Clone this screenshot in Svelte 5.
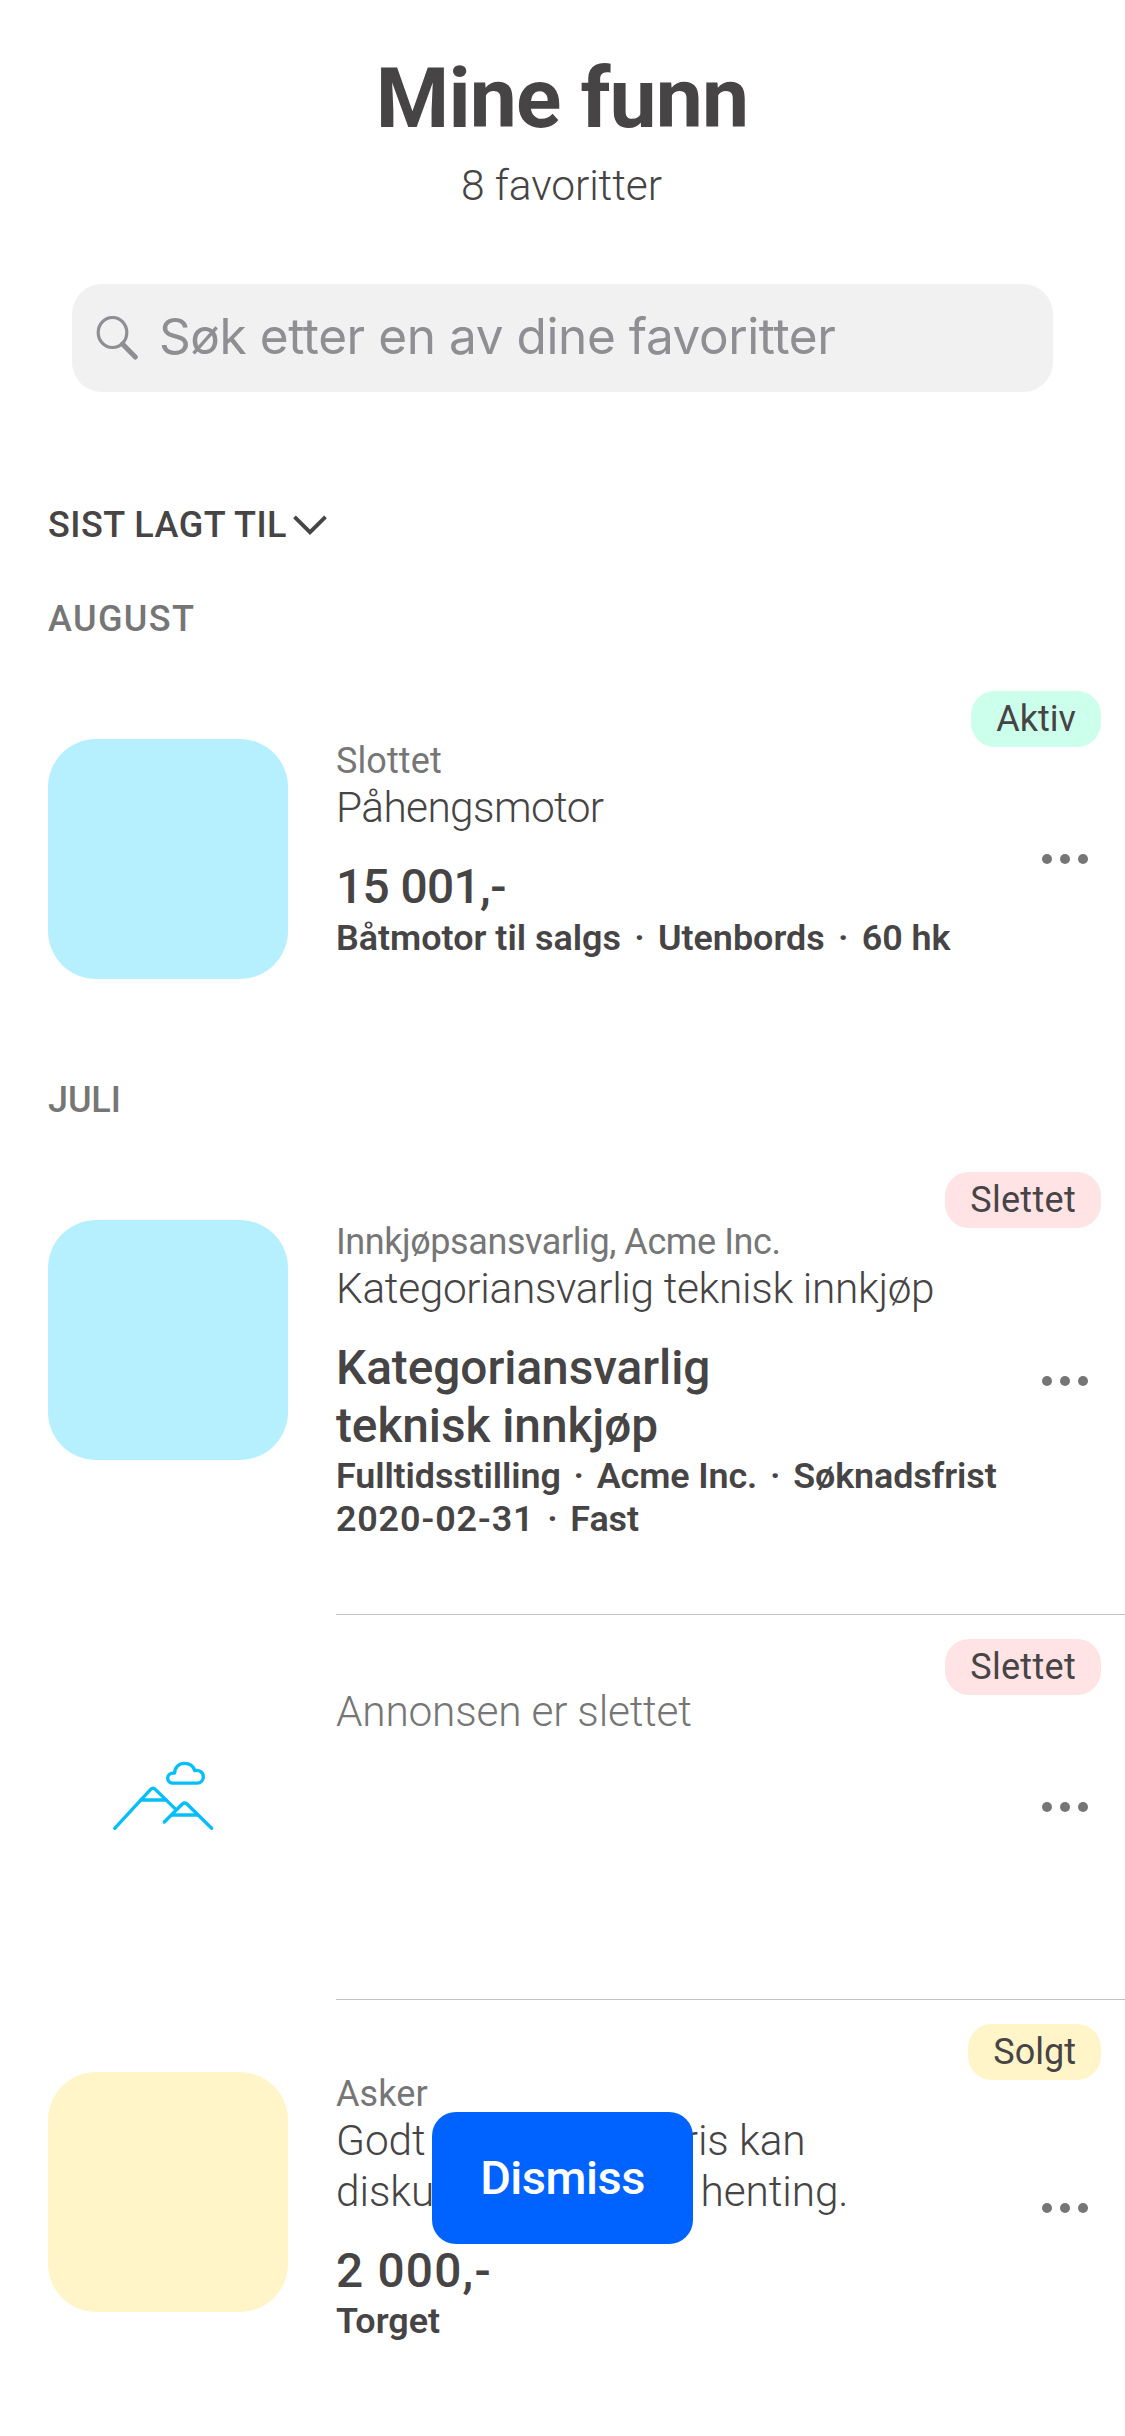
<script>
  const sections = [
    {
      title: 'AUGUST',
      items: [
        {
          status: 'Aktiv', tone: 'green', thumb: 'blue',
          caption: 'Slottet', name: 'Påhengsmotor', price: '15 001,-', fit: 'compact',
          detail: [['Båtmotor til salgs', 'Utenbords', '60 hk']]
        }
      ]
    },
    {
      title: 'JULI',
      items: [
        {
          status: 'Slettet', tone: 'red', thumb: 'blue',
          caption: 'Innkjøpsansvarlig, Acme Inc.',
          name: 'Kategoriansvarlig teknisk innkjøp',
          price: 'Kategoriansvarlig\nteknisk innkjøp', fit: 'long',
          detail: [['Fulltidsstilling', 'Acme Inc.', 'Søknadsfrist'], ['2020-02-31', 'Fast']]
        },
        { status: 'Slettet', tone: 'red', thumb: 'empty', name: 'Annonsen er slettet', fit: 'removed', detail: [] },
        {
          status: 'Solgt', tone: 'yellow', thumb: 'yellow',
          caption: 'Asker',
          name: 'Godt brukt stoler, pris kan\ndiskuteres ved rask henting.',
          price: '2 000,-', fit: 'wide', detail: [['Torget']]
        }
      ]
    }
  ];
</script>

<main class="screen">
  <header>
    <h1>Mine funn</h1>
    <p class="count">8 favoritter</p>
  </header>

  <div class="search">
    <svg class="glass" viewBox="0 0 44 44">
      <ellipse cx="16.500" cy="16.500" rx="14.300" ry="15" fill="none" stroke="#8e8e93" stroke-width="3.200" />
      <path d="M26.500 28 39.300 41" stroke="#8e8e93" stroke-width="5" stroke-linecap="round" />
    </svg>
    <span>Søk etter en av dine favoritter</span>
  </div>

  <button class="sort">
    <span>SIST LAGT TIL</span>
    <svg class="chevron" viewBox="0 0 34 20">
      <path d="M1.500 1.800 17 17.200 32.500 1.800" fill="none" stroke="#464444" stroke-width="3.800" />
    </svg>
  </button>

  {#each sections as section}
    <section>
      <h2 class:spaced={section.title.length > 4}>{section.title}</h2>
      {#each section.items as item, i}
        <article class="row {item.fit}" class:divided={i < section.items.length - 1}>
          <div class="thumb {item.thumb}">
            {#if item.thumb === 'empty'}
              <svg class="hills" viewBox="36 58 312 220" fill="none" stroke="#06befb" stroke-width="10" stroke-linecap="round" stroke-linejoin="round">
                <path d="M44 266 152 149Q159 142 166 149L228 210" />
                <path d="M122 181H198" />
                <path d="M193 247 247 193Q254 187 261 193L335 266" />
                <path d="M217 226H293" />
                <path d="M219 130.500H291C303 130.500 310 121 310 111 310 99 298 89 284 93 280 78 268 71 254 71 236 71 224 84 224 100 211 99 203 106 203 115 203 124 210 130.500 219 130.500Z" />
              </svg>
            {/if}
          </div>
          <div class="body">
            {#if item.caption}<p class="caption">{item.caption}</p>{/if}
            <p class="name">{item.name}</p>
            {#if item.price}<p class="price">{item.price}</p>{/if}
            {#each item.detail as line}
              <p class="detail">{#each line as part, n}{#if n}<span class="dot">·</span>{/if}<span class:date={part.startsWith('2')}>{part}</span>{/each}</p>
            {/each}
          </div>
          <div class="more"><i></i><i></i><i></i></div>
          <span class="tag {item.tone}">{item.status}</span>
        </article>
      {/each}
    </section>
  {/each}

  <button class="dismiss">Dismiss</button>
</main>

<style>
  :global(body) { margin: 0; background: #fff; }
  .screen {
    position: relative;
    width: 1125px;
    height: 2436px;
    overflow: hidden;
    background: #fff;
    color: #464444;
    font-family: Roboto, Inter, sans-serif;
    font-variant-ligatures: none;
  }
  h1, h2, p { margin: 0; font-weight: 400; }
  button { border: 0; padding: 0; background: none; color: inherit; font: inherit; }

  header { height: 284px; box-sizing: border-box; padding-top: 49px; text-align: center; }
  h1 { font-size: 84px; line-height: 100px; font-weight: 700; letter-spacing: -0.9px; padding-right: 1px; }
  .count { margin-top: 12px; font-size: 42.500px; line-height: 50px; font-weight: 300; letter-spacing: -0.1px; padding-right: 2px; }

  .search {
    display: flex;
    align-items: center;
    gap: 19px;
    box-sizing: border-box;
    height: 108px;
    margin: 0 72px;
    padding: 0 0 4px 24px;
    border-radius: 30px;
    background: #f1f1f1;
    color: #8e8e93;
    font-family: Inter, sans-serif;
    font-size: 49.500px;
    letter-spacing: -0.42px;
  }
  .glass { width: 44px; height: 44px; margin-top: 3px; }

  .sort { display: flex; align-items: center; gap: 6px; height: 44px; margin: 111px 0 0 48px; font-size: 36px; font-weight: 500; letter-spacing: 0.5px; line-height: 44px; }
  .chevron { width: 34px; height: 20px; }

  section:first-of-type { padding-top: 23px; }
  h2 { height: 97px; box-sizing: border-box; padding: 27px 0 0 48px; font-size: 36px; line-height: 44px; font-weight: 500; color: #767676; letter-spacing: -0.1px; }
  h2.spaced { letter-spacing: 1.4px; }

  .row { position: relative; display: grid; grid-template-columns: 240px 1fr 46px; column-gap: 48px; padding: 72px 37px 72px 48px; }
  .row.divided { padding-bottom: 73px; }
  .divided::after { content: ''; position: absolute; left: 336px; right: 0; bottom: 0; height: 1px; background: #c3c3c3; }
  .thumb { width: 240px; height: 240px; border-radius: 48px; }
  .thumb.blue { background: #b6f0ff; }
  .thumb.yellow { background: #fff5c8; }
  .thumb.empty { display: grid; place-items: center; }
  .hills { width: 104px; height: 73.300px; margin: 0 0 22px -8px; }

  .body { min-width: 0; }
  .body p { white-space: pre; }
  .caption { font-size: 36px; line-height: 44px; color: #767676; letter-spacing: 0.1px; }
  .long .caption { letter-spacing: -0.42px; }
  .name { font-size: 42.400px; line-height: 50.500px; font-weight: 300; letter-spacing: -0.33px; }
  .compact .name { letter-spacing: -0.6px; }
  .wide .name { letter-spacing: -0.1px; }
  .removed .name { color: #767676; letter-spacing: -0.2px; }
  .price { margin: 25.500px 0 0; font-size: 47.800px; line-height: 57.500px; font-weight: 500; letter-spacing: -0.05px; }
  .compact .price { letter-spacing: -0.6px; }
  .wide .price { letter-spacing: 1.2px; }
  .detail { font-size: 35.900px; line-height: 43px; font-weight: 600; letter-spacing: 0; }
  .detail:last-child { padding-bottom: 1px; }
  .long .detail { letter-spacing: -0.1px; }
  .dot { display: inline-block; width: 37px; text-align: center; }
  .long .dot { width: 36px; }
  .long .date { letter-spacing: 0.8px; }

  .more { align-self: center; justify-self: center; display: flex; gap: 7.500px; }
  .more i { width: 10.500px; height: 10.500px; border-radius: 50%; background: #767676; }

  .tag { position: absolute; top: 24px; right: 24px; height: 56px; padding: 0 25px; border-radius: 24px; font-size: 36px; line-height: 56px; letter-spacing: 0; }
  .green { background: #ccffec; }
  .tag.red { background: #ffe3e5; letter-spacing: 0.300px; }
  .tag.yellow { background: #fff5c8; }

  .dismiss {
    position: absolute;
    left: 432px;
    top: 2112px;
    width: 261px;
    height: 132px;
    padding-bottom: 2px;
    border-radius: 24px;
    background: #0063ff;
    color: #fff;
    font-size: 47px;
    font-weight: 500;
    letter-spacing: -0.5px;
  }
</style>
